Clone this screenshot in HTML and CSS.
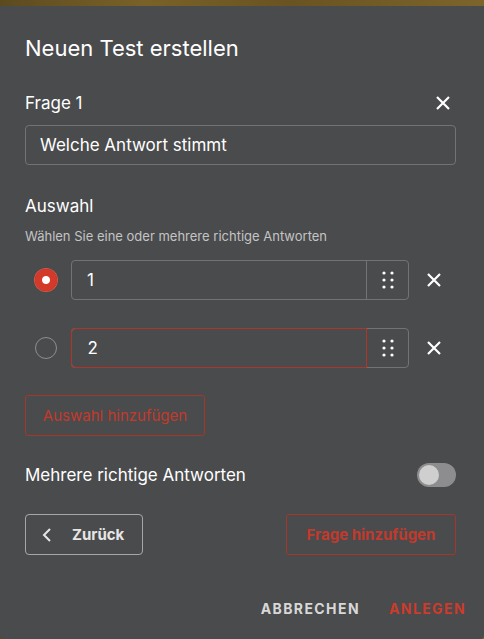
FILE: index.html
```html
<!DOCTYPE html>
<html lang="de">
<head>
  <meta charset="UTF-8" />
  <meta name="viewport" content="width=device-width, initial-scale=1.0"/>
  <title>Neuen Test erstellen</title>
  <link rel="stylesheet" href="styles.css">
</head>
<body>
  <div class="dialog">
    <h2 class="title">Neuen Test erstellen</h2>

    <div class="question-head">
      <span>Frage 1</span>
      <svg class="icon-x" viewBox="0 0 16 16"><path d="M2 2L14 14M14 2L2 14"/></svg>
    </div>
    <div class="field">Welche Antwort stimmt</div>

    <div class="section-title">Auswahl</div>
    <div class="hint">Wählen Sie eine oder mehrere richtige Antworten</div>

    <div class="choice">
      <span class="radio checked"></span>
      <div class="choice-box">
        <div class="choice-text">1</div>
        <div class="handle">
          <svg viewBox="0 0 12 18"><circle cx="2" cy="2" r="1.6"/><circle cx="10" cy="2" r="1.6"/><circle cx="2" cy="9" r="1.6"/><circle cx="10" cy="9" r="1.6"/><circle cx="2" cy="16" r="1.6"/><circle cx="10" cy="16" r="1.6"/></svg>
        </div>
      </div>
      <svg class="icon-x" viewBox="0 0 16 16"><path d="M2 2L14 14M14 2L2 14"/></svg>
    </div>

    <div class="choice">
      <span class="radio"></span>
      <div class="choice-box">
        <div class="choice-text focus">2</div>
        <div class="handle">
          <svg viewBox="0 0 12 18"><circle cx="2" cy="2" r="1.6"/><circle cx="10" cy="2" r="1.6"/><circle cx="2" cy="9" r="1.6"/><circle cx="10" cy="9" r="1.6"/><circle cx="2" cy="16" r="1.6"/><circle cx="10" cy="16" r="1.6"/></svg>
        </div>
      </div>
      <svg class="icon-x" viewBox="0 0 16 16"><path d="M2 2L14 14M14 2L2 14"/></svg>
    </div>

    <button class="btn-outline-red add-choice">Auswahl hinzufügen</button>

    <div class="toggle-row">
      <span>Mehrere richtige Antworten</span>
      <span class="toggle"><span class="knob"></span></span>
    </div>

    <div class="nav-row">
      <button class="btn-back">
        <svg viewBox="0 0 10 16"><path d="M8 2L2 8L8 14"/></svg>
        Zurück
      </button>
      <button class="btn-outline-red add-question">Frage hinzufügen</button>
    </div>

    <div class="actions">
      <button class="text-btn">ABBRECHEN</button>
      <button class="text-btn red">ANLEGEN</button>
    </div>
  </div>
</body>
</html>
```

FILE: styles.css
```css
body {
  margin: 0;
  height: 639px;
  overflow: hidden;
  background: linear-gradient(90deg, #5c4a1f, #7a6128 30%, #6a5322 60%, #7d642b);
  font-family: Inter, "Noto Sans", sans-serif;
  color: #fff;
}
.dialog {
  margin-top: 6px;
  height: 633px;
  box-sizing: border-box;
  background: #4a4b4d;
  border-radius: 0 0 4px 4px;
  padding: 30px 28px 0 25px;
}
.title {
  margin: 0;
  font-size: 22px;
  line-height: 24px;
  font-weight: 400;
}
.question-head {
  margin-top: 31px;
  display: flex;
  justify-content: space-between;
  align-items: center;
  font-size: 17px;
  line-height: 24px;
}
.icon-x {
  width: 16px;
  height: 16px;
  fill: none;
  stroke: #fff;
  stroke-width: 2.2;
  margin-right: 5px;
}
.field {
  margin-top: 10px;
  height: 40px;
  box-sizing: border-box;
  border: 1px solid #727375;
  border-radius: 4px;
  padding-left: 14px;
  display: flex;
  align-items: center;
  font-size: 17px;
}
.section-title {
  margin-top: 29px;
  font-size: 17px;
  line-height: 24px;
}
.hint {
  margin-top: 10px;
  font-size: 13px;
  line-height: 16px;
  color: #c4c4c4;
}
.choice {
  display: flex;
  align-items: center;
  height: 40px;
  margin-top: 16px;
}
.choice + .choice {
  margin-top: 28px;
}
.choice .icon-x {
  margin: 0 14px 0 17px;
}
.radio {
  width: 22px;
  height: 22px;
  box-sizing: border-box;
  border-radius: 50%;
  border: 1.5px solid #8e8f91;
  margin: 0 14px 0 10px;
  flex-shrink: 0;
}
.radio.checked {
  border: none;
  background: radial-gradient(circle, #fff 0 3.5px, #d43a2a 4.5px);
  box-shadow: 0 0 0 1px #e0533f;
}
.choice-box {
  flex: 1;
  display: flex;
  height: 40px;
  border: 1px solid #727375;
  border-radius: 4px;
  box-sizing: border-box;
}
.choice-text {
  flex: 1;
  display: flex;
  align-items: center;
  padding-left: 15px;
  font-size: 17px;
  border-right: 1px solid #727375;
}
.choice-text.focus {
  margin: -1px 0 -1px -1px;
  border: 1.5px solid #b03428;
  border-radius: 4px 0 0 4px;
  padding-left: 15.5px;
}
.handle {
  width: 41px;
  display: flex;
  align-items: center;
  justify-content: center;
}
.handle svg {
  width: 12px;
  height: 18px;
  fill: #fff;
}
button {
  font-family: inherit;
  background: none;
  cursor: pointer;
}
.btn-outline-red {
  height: 41px;
  border: 1px solid #a3372c;
  border-radius: 3px;
  color: #c23a2c;
  font-size: 15px;
}
.add-choice {
  margin-top: 27px;
  width: 180px;
  display: block;
}
.toggle-row {
  margin-top: 27px;
  display: flex;
  justify-content: space-between;
  align-items: center;
  font-size: 17px;
  line-height: 24px;
}
.toggle {
  width: 39px;
  height: 24px;
  border-radius: 12px;
  background: #8d8d8f;
  box-sizing: border-box;
  padding: 2px;
  display: flex;
}
.knob {
  width: 20px;
  height: 20px;
  border-radius: 50%;
  background: #cfcfcf;
}
.nav-row {
  margin-top: 27px;
  display: flex;
  justify-content: space-between;
}
.btn-back {
  width: 118px;
  height: 41px;
  border: 1px solid #a6a7a9;
  border-radius: 4px;
  color: #e6e6e6;
  font-size: 15px;
  font-weight: 700;
  display: flex;
  align-items: center;
  padding: 0 0 0 16px;
  gap: 20px;
}
.btn-back svg {
  width: 10px;
  height: 16px;
  fill: none;
  stroke: #e6e6e6;
  stroke-width: 2;
}
.add-question {
  width: 170px;
  font-weight: 700;
}
.actions {
  margin-top: 37px;
  display: flex;
  justify-content: flex-end;
  gap: 9px;
  margin-right: -20px;
}
.text-btn {
  border: none;
  color: #d8d8d8;
  font-size: 14px;
  font-weight: 700;
  letter-spacing: 1.4px;
  padding: 8px 10px;
}
.text-btn.red {
  color: #cc3b2b;
}
```
